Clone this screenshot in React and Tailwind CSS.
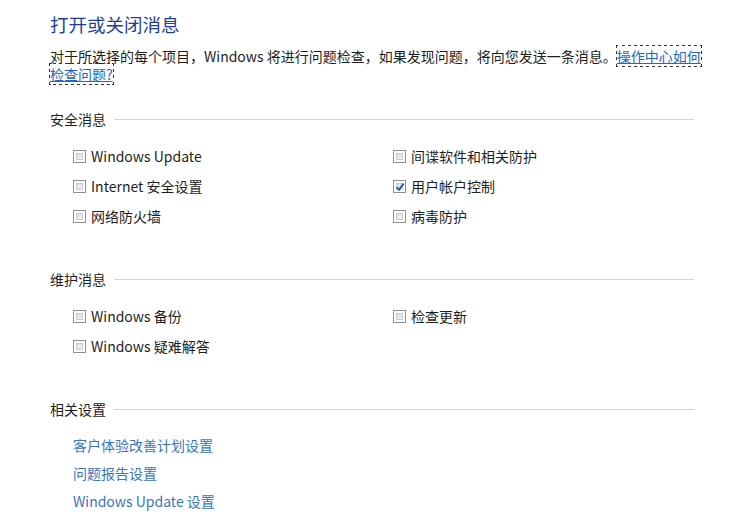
import React from "react";

const font = {
  fontFamily: '"Noto Sans CJK SC", "Noto Sans", sans-serif',
};

const Checkbox = ({ checked }) => (
  <span className="relative mr-[5px] inline-block h-[13px] w-[13px] shrink-0 border border-[#8e8f8f] bg-white">
    <span className="absolute inset-[2px] border border-[#c9cdd2] bg-gradient-to-br from-[#d9dcdf] to-[#f4f5f6]" />
    {checked && (
      <svg
        className="absolute left-[1px] top-[1px]"
        width="10"
        height="10"
        viewBox="0 0 10 10"
      >
        <path
          d="M1.5 5.2 L4 7.8 L8.6 1.6"
          fill="none"
          stroke="#2f4f9e"
          strokeWidth="1.8"
        />
      </svg>
    )}
  </span>
);

const Option = ({ label, checked }) => (
  <label className="flex h-[30px] items-center text-[14px] leading-[20px] text-[#1e1e1e]">
    <Checkbox checked={checked} />
    <span>{label}</span>
  </label>
);

const Section = ({ title, className }) => (
  <div className={"flex items-center gap-[8px] " + className}>
    <span className="text-[14px] leading-[20px] text-[#1e1e1e]">{title}</span>
    <div className="h-px flex-1 bg-[#d5d5d5]" />
  </div>
);

export default function App() {
  return (
    <div className="h-[530px] w-[746px] overflow-hidden bg-white" style={font}>
      <div className="w-[694px] pl-[50px] pt-[11px]">
        <h1 className="text-[18.5px] leading-[26px] text-[#1f3f95]">
          打开或关闭消息
        </h1>

        <p className="mt-[10px] w-[660px] text-[14px] leading-[18px] text-[#1e1e1e]">
          对于所选择的每个项目，Windows 将进行问题检查，如果发现问题，将向您发送一条消息。
          <a
            href="#"
            className="text-[#2266cc] underline outline outline-1 outline-dotted outline-[#333]"
          >
            操作中心如何
            <br />
            检查问题?
          </a>
        </p>

        <Section title="安全消息" className="mt-[26px]" />
        <div className="mt-[12px] grid grid-cols-[320px_1fr] pl-[23px]">
          <Option label="Windows Update" />
          <Option label="间谍软件和相关防护" />
          <Option label="Internet 安全设置" />
          <Option label="用户帐户控制" checked />
          <Option label="网络防火墙" />
          <Option label="病毒防护" />
        </div>

        <Section title="维护消息" className="mt-[38px]" />
        <div className="mt-[12px] grid grid-cols-[320px_1fr] pl-[23px]">
          <Option label="Windows 备份" />
          <Option label="检查更新" />
          <Option label="Windows 疑难解答" />
        </div>

        <Section title="相关设置" className="mt-[38px]" />
        <div className="mt-[12px] flex flex-col pl-[23px]">
          {["客户体验改善计划设置", "问题报告设置", "Windows Update 设置"].map(
            (t) => (
              <a
                key={t}
                href="#"
                className="flex h-[28px] items-center text-[14px] leading-[20px] text-[#3a73c4]"
              >
                {t}
              </a>
            )
          )}
        </div>
      </div>
    </div>
  );
}
